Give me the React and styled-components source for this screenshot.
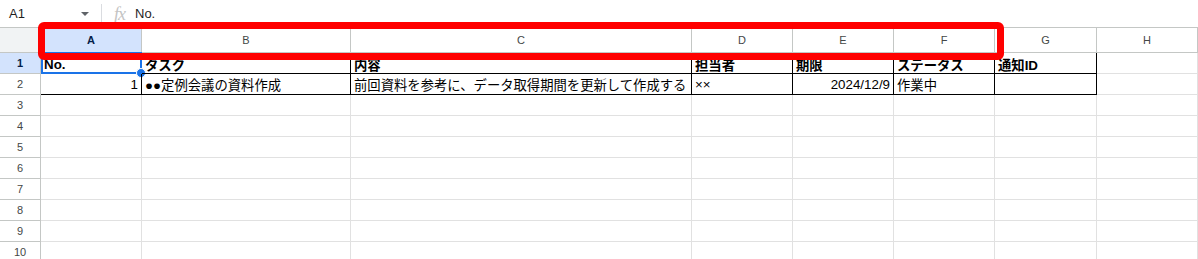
import styled, { createGlobalStyle, css } from 'styled-components'

const GlobalStyle = createGlobalStyle`
  html, body {
    margin: 0;
    padding: 0;
    background: #fff;
    overflow: hidden;
  }
  body {
    font-family: "Liberation Sans", "Noto Sans CJK JP", Arial, sans-serif;
    color: #000;
  }
`

const COLUMNS = [
  { key: 'A', width: 101 },
  { key: 'B', width: 209 },
  { key: 'C', width: 341 },
  { key: 'D', width: 101 },
  { key: 'E', width: 101 },
  { key: 'F', width: 101 },
  { key: 'G', width: 102 },
  { key: 'H', width: 101 },
]

const ROWS = [
  { head: true, cells: ['No.', 'タスク', '内容', '担当者', '期限', 'ステータス', '通知ID'] },
  {
    cells: [
      { text: '1', right: true },
      '●●定例会議の資料作成',
      '前回資料を参考に、データ取得期間を更新して作成する',
      '××',
      { text: '2024/12/9', right: true },
      '作業中',
      '',
    ],
  },
]

const Page = styled.div`
  position: relative;
  width: 1198px;
  height: 259px;
  overflow: hidden;
`

const FormulaBar = styled.div`
  display: flex;
  align-items: center;
  height: 28px;
  box-sizing: border-box;
  border-bottom: 1px solid #c4c7c5;
  font-size: 13px;
  color: #1f1f1f;
`

const NameBox = styled.div`
  display: flex;
  align-items: center;
  justify-content: space-between;
  width: 101px;
  padding-left: 9px;
  padding-right: 12px;
  box-sizing: border-box;
`

const Caret = styled.span`
  width: 0;
  height: 0;
  border-left: 4px solid transparent;
  border-right: 4px solid transparent;
  border-top: 4px solid #5f6368;
`

const Divider = styled.span`
  width: 1px;
  height: 20px;
  background: #dadce0;
  margin-right: 12px;
`

const Fx = styled.span`
  font-family: "Liberation Serif", serif;
  font-style: italic;
  font-size: 18px;
  line-height: 1;
  color: #c4c4c4;
  letter-spacing: -1px;
  margin-right: 10px;
`

const Grid = styled.div`
  display: grid;
  grid-template-columns: 41px ${COLUMNS.map((c) => `${c.width}px`).join(' ')};
  grid-template-rows: 25px;
  grid-auto-rows: 21px;
`

const HeaderCell = styled.div`
  display: flex;
  align-items: center;
  justify-content: center;
  box-sizing: border-box;
  border-right: 1px solid #c4c7c5;
  border-bottom: 1px solid #c4c7c5;
  font-size: 11px;
  color: #444746;
  background: #fff;
  ${(p) => p.$corner && css`background: #f1f3f4;`}
  ${(p) => p.$active && css`
    background: #d3e3fd;
    color: #041e49;
    font-weight: bold;
  `}
`

const Cell = styled.div`
  position: relative;
  display: flex;
  align-items: center;
  box-sizing: border-box;
  padding: 1px 3px 0;
  border-right: 1px solid #e1e1e1;
  border-bottom: 1px solid #e1e1e1;
  font-size: 13.33px;
  white-space: nowrap;
  ${(p) => p.$boxed && css`
    border-right-color: #000;
    border-bottom-color: #000;
  `}
  ${(p) => p.$bold && css`
    font-weight: bold;
    padding-top: 3px;
  `}
  ${(p) => p.$right && css`justify-content: flex-end;`}
`

const Selection = styled.span`
  position: absolute;
  left: 0;
  top: -1px;
  right: -1px;
  bottom: -1px;
  border: 2px solid #1a73e8;
  pointer-events: none;
`

const Handle = styled.span`
  position: absolute;
  right: -6px;
  bottom: -6px;
  width: 8px;
  height: 8px;
  border-radius: 50%;
  background: #1a73e8;
  border: 1px solid #fff;
`

const Highlight = styled.div`
  position: absolute;
  left: 38px;
  top: 22px;
  width: 966px;
  height: 38px;
  box-sizing: border-box;
  border: 7px solid #ff0000;
  border-radius: 6px;
  pointer-events: none;
`

function App() {
  const emptyRows = [3, 4, 5, 6, 7, 8, 9, 10]
  return (
    <Page>
      <GlobalStyle />
      <FormulaBar>
        <NameBox>
          <span>A1</span>
          <Caret />
        </NameBox>
        <Divider />
        <Fx>fx</Fx>
        <span>No.</span>
      </FormulaBar>
      <Grid>
        <HeaderCell $corner />
        {COLUMNS.map((c) => (
          <HeaderCell key={c.key} $active={c.key === 'A'}>{c.key}</HeaderCell>
        ))}

        {ROWS.map((row, r) => (
          <Row key={r} num={r + 1} row={row} />
        ))}

        {emptyRows.map((n) => (
          <EmptyRow key={n} num={n} />
        ))}
      </Grid>
      <Highlight />
    </Page>
  )
}

function Row({ num, row }) {
  return (
    <>
      <HeaderCell $active={num === 1}>{num}</HeaderCell>
      {COLUMNS.map((c, i) => {
        if (i >= row.cells.length) return <Cell key={c.key} />
        const raw = row.cells[i]
        const cell = typeof raw === 'string' ? { text: raw } : raw
        return (
          <Cell key={c.key} $boxed $bold={row.head} $right={cell.right}>
            {cell.text}
            {num === 1 && i === 0 && (
              <Selection>
                <Handle />
              </Selection>
            )}
          </Cell>
        )
      })}
    </>
  )
}

function EmptyRow({ num }) {
  return (
    <>
      <HeaderCell>{num}</HeaderCell>
      {COLUMNS.map((c) => (
        <Cell key={c.key} />
      ))}
    </>
  )
}

export default App
